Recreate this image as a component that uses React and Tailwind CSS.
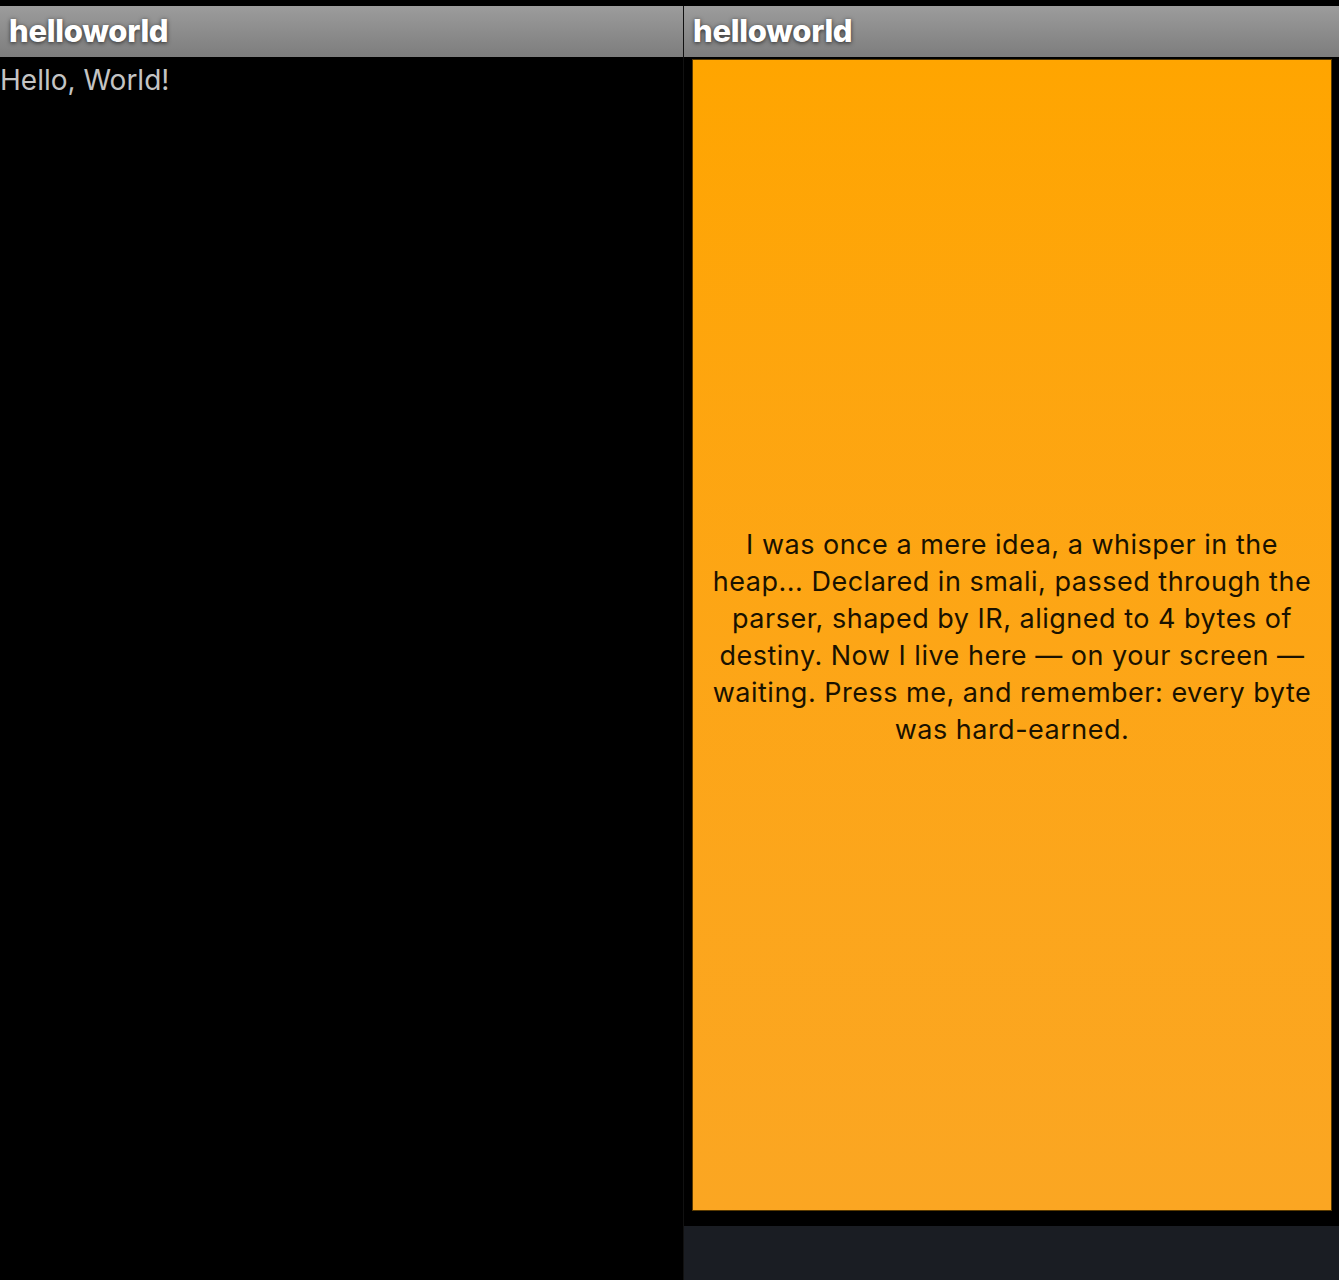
import React from "react";

const LINES = [
  "I was once a mere idea, a whisper in the",
  "heap... Declared in smali, passed through the",
  "parser, shaped by IR, aligned to 4 bytes of",
  "destiny. Now I live here \u2014 on your screen \u2014",
  "waiting. Press me, and remember: every byte",
  "was hard-earned.",
];

function TitleBar({ title }) {
  return (
    <div className="h-[51px] shrink-0 flex items-center px-[9px] bg-gradient-to-b from-[#9c9c9c] to-[#7d7d7d]">
      <span className="text-[31px] font-extrabold text-white tracking-[-0.3px] [text-shadow:0_1px_4px_rgba(0,0,0,0.7)] font-['Inter',sans-serif]">
        {title}
      </span>
    </div>
  );
}

export default function App() {
  return (
    <div className="flex h-screen bg-black pt-[6px] font-['Inter',sans-serif]">
      <div className="w-[683px] flex flex-col">
        <TitleBar title="helloworld" />
        <p className="text-[28px] leading-[46px] text-[#c4c4c4]">
          Hello, World!
        </p>
      </div>
      <div className="w-px bg-[#111]" />
      <div className="flex-1 flex flex-col">
        <TitleBar title="helloworld" />
        <div className="pt-[2px] pl-[8px]">
          <button
            type="button"
            className="w-[640px] h-[1152px] flex items-center justify-center border border-[#5a3a00] bg-gradient-to-b from-[#ffa500] to-[#fba622] text-[#1a1200]"
          >
            <span className="text-[27px] leading-[37px] tracking-[0.5px] text-center pt-[4px]">
              {LINES.map((line, i) => (
                <span key={i} className="block">
                  {line}
                </span>
              ))}
            </span>
          </button>
        </div>
        <div className="mt-[15px] flex-1 bg-[#1a1d23]" />
      </div>
    </div>
  );
}
